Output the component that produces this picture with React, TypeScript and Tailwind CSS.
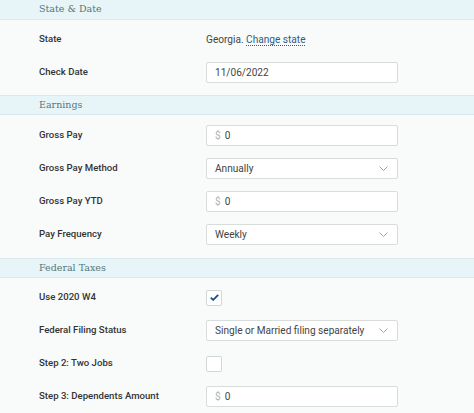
import React from "react";

const label = "text-[9.6px] font-medium text-[#333]";
const box = "h-[21px] w-[192px] rounded-[2px] border border-[#d9dcdc] bg-white flex items-center px-2 text-[10.1px] text-[#444]";

function Header({ title, top = true }: { title: string; top?: boolean }) {
  return (
    <div className={`h-5 border-b ${top ? "border-t" : ""} border-[#d8eaee] bg-[#e8f5f8] flex items-center pl-[39px]`}>
      <span className="text-[9.5px] text-[#557579]" style={{ fontFamily: '"DejaVu Serif", serif' }}>
        {title}
      </span>
    </div>
  );
}

function Row({ name, children }: { name: string; children: React.ReactNode }) {
  return (
    <div className="h-[33px] grid grid-cols-[206px_192px] items-center">
      <span className={`${label} pl-[39px]`}>{name}</span>
      <div className="flex items-center">{children}</div>
    </div>
  );
}

function Money() {
  return (
    <div className={box}>
      <span className="text-[#b0b0b0] mr-[4px]">$</span>
      <span>0</span>
    </div>
  );
}

function Select({ value }: { value: string }) {
  return (
    <div className={`${box} justify-between`}>
      <span>{value}</span>
      <svg width="9" height="5" viewBox="0 0 9 5" className="mr-[1px]">
        <path d="M0.5 0.5 L4.5 4.5 L8.5 0.5" fill="none" stroke="#9a9a9a" strokeWidth="0.9" />
      </svg>
    </div>
  );
}

function Check({ on }: { on?: boolean }) {
  return (
    <div className="h-4 w-4 rounded-[2px] border border-[#d3d6d6] bg-white flex items-center justify-center">
      {on && (
        <svg width="9" height="7" viewBox="0 0 9 7">
          <path d="M0.8 3.6 L3.2 5.9 L8.2 0.9" fill="none" stroke="#1f4d8c" strokeWidth="1.8" />
        </svg>
      )}
    </div>
  );
}

export default function App() {
  return (
    <div className="w-[474px] h-[413px] overflow-hidden bg-[#f9fbfb]" style={{ fontFamily: "Roboto, sans-serif" }}>
      <Header title="State & Date" top={false} />
      <div className="bg-[#f9fbfb] pt-[3px] pb-[6px]">
        <Row name="State">
          <span className="text-[10.1px] text-[#444]">
            Georgia.{" "}
            <span className="text-[#2c5b86] border-b border-dotted border-[#2c5b86]">Change state</span>
          </span>
        </Row>
        <Row name="Check Date">
          <div className={box}>11/06/2022</div>
        </Row>
      </div>
      <Header title="Earnings" />
      <div className="bg-[#f9fbfb] pt-[4px] pb-[7px]">
        <Row name="Gross Pay">
          <Money />
        </Row>
        <Row name="Gross Pay Method">
          <Select value="Annually" />
        </Row>
        <Row name="Gross Pay YTD">
          <Money />
        </Row>
        <Row name="Pay Frequency">
          <Select value="Weekly" />
        </Row>
      </div>
      <Header title="Federal Taxes" />
      <div className="bg-[#f9fbfb] pt-[3px]">
        <Row name="Use 2020 W4">
          <Check on />
        </Row>
        <Row name="Federal Filing Status">
          <Select value="Single or Married filing separately" />
        </Row>
        <Row name="Step 2: Two Jobs">
          <Check />
        </Row>
        <Row name="Step 3: Dependents Amount">
          <Money />
        </Row>
      </div>
    </div>
  );
}
